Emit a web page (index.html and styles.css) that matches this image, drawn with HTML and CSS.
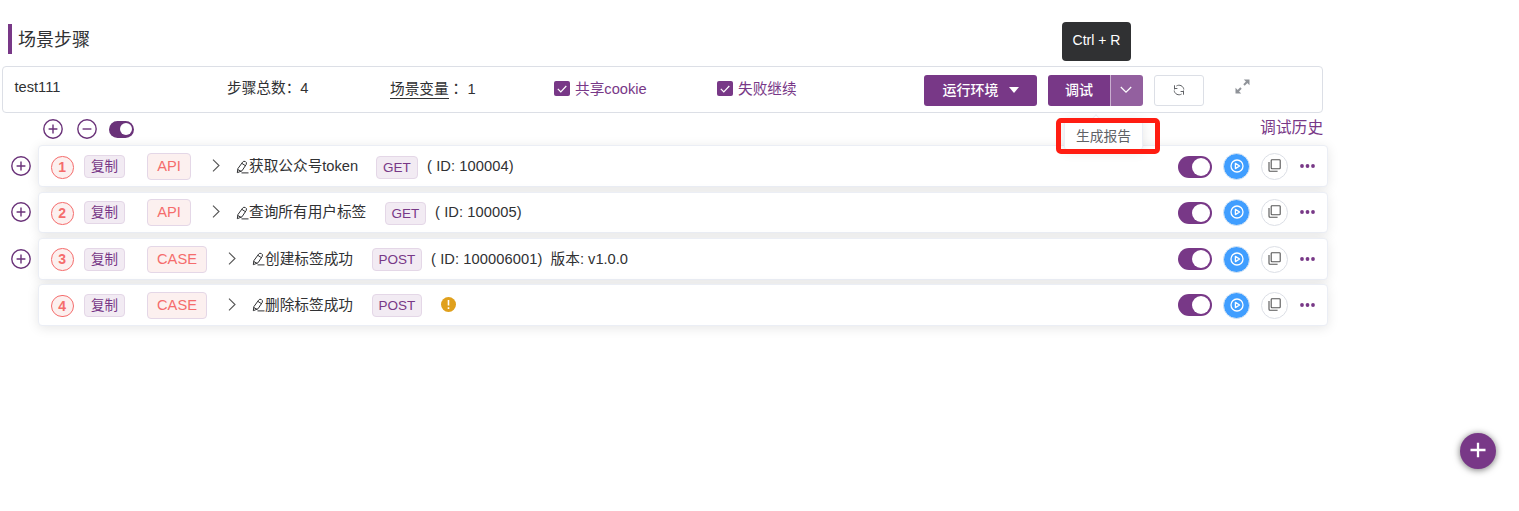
FILE: index.html
```html
<!DOCTYPE html>
<html lang="zh-CN">
<head>
<meta charset="utf-8">
<title>场景步骤</title>
<link rel="stylesheet" href="styles.css">
</head>
<body>
<svg class="defs" width="0" height="0">
  <symbol id="plus" viewBox="0 0 20 20"><g fill="none" stroke="currentColor" stroke-width="1.4"><circle cx="10" cy="10" r="9.2"/><path d="M5.600 10h8.800M10 5.600v8.800"/></g></symbol>
  <symbol id="minus" viewBox="0 0 20 20"><g fill="none" stroke="currentColor" stroke-width="1.4"><circle cx="10" cy="10" r="9.2"/><path d="M5.600 10h8.800"/></g></symbol>
  <symbol id="chevron" viewBox="0 0 8 13"><path d="M1 .7l6 5.800-6 5.800" fill="none" stroke="currentColor" stroke-width="1.1"/></symbol>
  <symbol id="edit" viewBox="0 0 13 14"><path d="M6.600 2.200Q7.600 .7 9.300 1.500T10.300 4.300L6 10.800 1.300 12.700 1.900 8.600zM5.800 3.300L9.400 5.700M1.700 9.500L5.200 11.400M5.500 12.900H12.500" fill="none" stroke="currentColor" stroke-width="1"/></symbol>
  <symbol id="play" viewBox="0 0 14 14"><g fill="none" stroke="currentColor" stroke-width="1.3"><circle cx="7" cy="7" r="6"/><path d="M5.400 4.400v5.200L9.600 7z" stroke-linejoin="round"/></g></symbol>
  <symbol id="copy" viewBox="0 0 13 13"><g fill="none" stroke="currentColor" stroke-width="1.1"><rect x="3.200" y=".8" width="9" height="9" rx=".8"/><path d="M1 2.900v8.300q0 1 1 1h7.600"/></g></symbol>
  <symbol id="dots" viewBox="0 0 15 4"><g fill="currentColor"><circle cx="2" cy="2" r="1.900"/><circle cx="7.500" cy="2" r="1.900"/><circle cx="13" cy="2" r="1.900"/></g></symbol>
  <symbol id="check" viewBox="0 0 10 8"><path d="M.8 3.800l3 3L9.300 1" fill="none" stroke="currentColor" stroke-width="1.2"/></symbol>
</svg>
<main class="page">
  <h1 class="title"><span class="title-bar"></span><span class="title-text">场景步骤</span></h1>

  <section class="toolbar">
    <span class="tb-name">test111</span>
    <span class="tb-total">步骤总数：4</span>
    <span class="tb-vars"><u class="vars-link">场景变量</u><span class="colon" lang="zh-TW">：</span>&nbsp;1</span>
    <label class="check check-cookie"><i class="box"><svg><use href="#check"/></svg></i>共享cookie</label>
    <label class="check check-fail"><i class="box"><svg><use href="#check"/></svg></i>失败继续</label>
    <button class="btn btn-env">运行环境<i class="caret"></i></button>
    <div class="split">
      <button class="btn btn-debug">调试</button>
      <button class="btn btn-more"><svg width="12" height="8" viewBox="0 0 12 8"><path d="M.8 1l5.200 5.200L11.200 1" fill="none" stroke="#fff" stroke-width="1.2"/></svg></button>
      <div class="tooltip">Ctrl + R</div>
      <div class="menu">生成报告</div>
      <svg class="highlight" width="104" height="36"><rect x="2.500" y="2.500" width="99" height="31" rx="2.500" fill="none" stroke="#ff1d12" stroke-width="5"/></svg>
    </div>
    <button class="btn-refresh"><svg width="12" height="12" viewBox="0 0 12 12"><g fill="none" stroke="#606266" stroke-width="1"><path d="M1.500 5.500V1.300M1.500 4.500H4.400M3.400 2A4.800 4.800 0 0 1 10.800 5.500"/><path d="M10.500 6.500v4.200M10.500 7.500H7.600M8.600 10A4.800 4.800 0 0 1 1.200 6.500"/></g></svg></button>
    <svg class="expand" width="15" height="15" viewBox="0 0 15 15"><g fill="#909399"><path d="M8.800 .5h5.700V6.200zM.5 8.800v5.700H6.200z"/><path d="M12 1.600L13.400 3 9.700 6.700 8.300 5.300zM5.300 8.300L6.700 9.700 3 13.400 1.600 12z"/></g></svg>
  </section>

  <div class="subbar">
    <svg class="ic20"><use href="#plus"/></svg>
    <svg class="ic20"><use href="#minus"/></svg>
    <span class="switch small"></span>
    <a class="history">调试历史</a>
  </div>

  <div class="steps">
    <div class="step">
      <svg class="ic20 add"><use href="#plus"/></svg>
      <div class="card">
        <span class="num">1</span><span class="tag copy-tag">复制</span><span class="tag type api">API</span>
        <svg class="chev"><use href="#chevron"/></svg><svg class="edit"><use href="#edit"/></svg>
        <span class="name n1">获取公众号token</span><span class="tag method get">GET</span><span class="id">( ID: 100004)</span>
        <div class="actions"><span class="switch"></span><span class="round run"><svg><use href="#play"/></svg></span><span class="round dup"><svg><use href="#copy"/></svg></span><svg class="dots"><use href="#dots"/></svg></div>
      </div>
    </div>
    <div class="step">
      <svg class="ic20 add"><use href="#plus"/></svg>
      <div class="card">
        <span class="num">2</span><span class="tag copy-tag">复制</span><span class="tag type api">API</span>
        <svg class="chev"><use href="#chevron"/></svg><svg class="edit"><use href="#edit"/></svg>
        <span class="name n2">查询所有用户标签</span><span class="tag method get">GET</span><span class="id">( ID: 100005)</span>
        <div class="actions"><span class="switch"></span><span class="round run"><svg><use href="#play"/></svg></span><span class="round dup"><svg><use href="#copy"/></svg></span><svg class="dots"><use href="#dots"/></svg></div>
      </div>
    </div>
    <div class="step">
      <svg class="ic20 add"><use href="#plus"/></svg>
      <div class="card">
        <span class="num">3</span><span class="tag copy-tag">复制</span><span class="tag type case">CASE</span>
        <svg class="chev"><use href="#chevron"/></svg><svg class="edit"><use href="#edit"/></svg>
        <span class="name n3">创建标签成功</span><span class="tag method post">POST</span><span class="id">( ID: 100006001)</span><span class="version">版本: v1.0.0</span>
        <div class="actions"><span class="switch"></span><span class="round run"><svg><use href="#play"/></svg></span><span class="round dup"><svg><use href="#copy"/></svg></span><svg class="dots"><use href="#dots"/></svg></div>
      </div>
    </div>
    <div class="step">
      <div class="card">
        <span class="num">4</span><span class="tag copy-tag">复制</span><span class="tag type case">CASE</span>
        <svg class="chev"><use href="#chevron"/></svg><svg class="edit"><use href="#edit"/></svg>
        <span class="name n3">删除标签成功</span><span class="tag method post">POST</span>
        <svg class="warn" viewBox="0 0 15 15"><circle cx="7.500" cy="7.500" r="7.500" fill="#e0a01c"/><path d="M7.500 3v5.500M7.500 10.200v1.800" stroke="#fff" stroke-width="1.600"/></svg>
        <div class="actions"><span class="switch"></span><span class="round run"><svg><use href="#play"/></svg></span><span class="round dup"><svg><use href="#copy"/></svg></span><svg class="dots"><use href="#dots"/></svg></div>
      </div>
    </div>
  </div>
  <button class="fab"><svg width="16" height="16" viewBox="0 0 16 16"><path d="M.5 8h15M8 .8v14.400" stroke="#fff" stroke-width="2.300"/></svg></button>
</main>
</body>
</html>
```
FILE: styles.css
```css
* { box-sizing: border-box; }
body {
  margin: 0;
  background: #fff;
  color: #303133;
  font: 14.67px/20px "Liberation Sans", "Noto Sans CJK SC", sans-serif;
  white-space: nowrap;
}
button { margin: 0; padding: 0; border: 0; font: inherit; }
svg { display: block; flex: none; }
.defs { position: absolute; }
.page { position: relative; width: 1519px; height: 511px; padding-top: 24px; overflow: hidden; }

.title { display: flex; align-items: center; gap: 6px; height: 30px; margin: 0 0 12px 8px; font-size: 18px; font-weight: 400; }
.title-bar { width: 4px; height: 30px; background: #783887; }
.title-text { padding-top: 2px; }

.toolbar {
  display: flex;
  align-items: center;
  width: 1321px;
  height: 47px;
  margin-left: 2px;
  padding: 0 0 0 11.500px;
  border: 1px solid #dcdfe6;
  border-radius: 4px;
}
.toolbar > * { flex: none; }
.tb-name { width: 212.500px; margin-top: -5px; }
.tb-total { width: 163px; margin-top: -3px; }
.tb-vars { width: 164px; margin-top: -3px; }
.vars-link { display: inline-block; height: 20px; border-bottom: 1px solid #303133; text-decoration: none; }
.colon { font-family: "Noto Sans CJK TC", sans-serif; }
.check { display: flex; align-items: center; gap: 5.500px; margin-top: -2px; color: #783887; }
.check-cookie { width: 163px; }
.check-fail { width: 207px; }
.box { display: flex; align-items: center; justify-content: center; width: 15.500px; height: 15.500px; border-radius: 2px; background: #783887; color: #fff; }
.box svg { width: 10px; height: 8px; }
.btn { display: flex; align-items: center; justify-content: center; height: 31px; border-radius: 3px; background: #783887; color: #fff; font-size: 14px; font-weight: 500; }
.btn-env { gap: 10px; width: 113px; margin: 1px 11px 0 0; }
.caret { border: 5px solid transparent; border-top: 6px solid #fff; border-bottom: 0; }
.split { position: relative; display: flex; width: 95px; margin: 1px 11px 0 0; }
.btn-debug { width: 62px; border-radius: 3px 0 0 3px; }
.btn-more { width: 33px; padding-right: 2px; border-left: 1px solid #c9afcf; border-radius: 0 3px 3px 0; background: #93609f; }
.tooltip { position: absolute; left: 14px; top: -53px; width: 69px; height: 39px; border-radius: 4px; background: #303133; color: #fff; font-size: 14px; line-height: 37px; text-align: center; }
.menu { position: absolute; z-index: 2; left: 16px; top: 44px; width: 79px; height: 31px; border: 1px solid #ebeef5; border-radius: 3px; background: #fff; box-shadow: 0 2px 12px rgba(0, 0, 0, .1); color: #606266; font-size: 13.800px; line-height: 33px; text-align: center; }
.menu::before { content: ""; position: absolute; left: 27px; top: -4px; width: 7px; height: 7px; border: 1px solid #ebeef5; border-width: 1px 0 0 1px; background: #fff; transform: rotate(45deg); }
.highlight { position: absolute; z-index: 3; left: 8px; top: 43px; }
.btn-refresh { display: flex; align-items: center; justify-content: center; width: 50px; height: 31px; margin: 1px 31px 0 0; border: 1px solid #dcdfe6; border-radius: 3px; background: #fff; }
.expand { margin-top: -7px; }

.subbar { display: flex; align-items: center; height: 32.400px; padding-left: 43px; color: #66307a; }
.ic20 { width: 20px; height: 20px; margin-right: 14px; color: #6a3279; }
.subbar .ic20 + .ic20 { margin-right: 12px; }
.history { width: 64px; margin: -3px 0 0 1126px; color: #783887; font-size: 15.800px; }
.switch { position: relative; flex: none; width: 34px; height: 22px; border-radius: 11px; background: #783887; }
.switch::after { content: ""; position: absolute; right: 2px; top: 2px; width: 18px; height: 18px; border-radius: 50%; background: #fff; }
.switch.small { width: 25px; height: 17px; background: #6a3279; }
.switch.small::after { width: 12px; height: 12px; right: 2px; top: 2.500px; }

.steps { display: flex; flex-direction: column; gap: 4.400px; width: 1328px; }
.step { display: flex; align-items: center; justify-content: flex-end; height: 41.800px; }
.add { margin: 0 7.500px 0 0; }
.card { display: flex; align-items: center; width: 1290px; height: 100%; padding: 1px 12px 0 12px; border: 1px solid #ebeef5; border-radius: 4px; background: #fff; box-shadow: 0 2px 12px rgba(0, 0, 0, .1); }
.card > * { flex: none; }
.num { width: 22.500px; height: 22.500px; margin: 1px 10.500px 0 0; border: 1px solid #f56c6c; border-radius: 50%; background: #fcf0ef; color: #f56c6c; font-size: 14px; font-weight: 700; line-height: 21px; text-align: center; }
.tag { border: 1px solid #e4d7e7; border-radius: 4px; background: #f2ebf3; color: #783887; font-size: 13.500px; text-align: center; }
.copy-tag { width: 41px; height: 23px; margin-right: 22px; line-height: 21px; }
.type { height: 27px; margin-right: 21px; background: #fcf0ef; color: #f56c6c; font-size: 14.670px; line-height: 25px; }
.api { width: 44px; }
.case { width: 60px; }
.chev { width: 8px; height: 13px; margin: -2px 16px 0 0; color: #555; }
.edit { width: 13px; height: 14px; }
.name { margin-top: -1px; }
.n1 { width: 127px; }
.n2 { width: 136px; }
.n3 { width: 107px; }
.method { height: 23px; margin: 1px 9px 0 0; line-height: 21px; }
.get { width: 42px; }
.n2 + .get { width: 41px; }
.post { width: 50px; }
.id { margin: -1px 8px 0 0; letter-spacing: .1px; }
.version { margin-top: -1px; }
.warn { width: 15px; height: 15px; margin: -2px 0 0 10px; }
.actions { display: flex; align-items: center; margin-left: auto; }
.round { display: flex; justify-content: center; width: 27px; height: 27px; border-radius: 50%; }
.run { margin-left: 11px; border: 1px solid #d9e6f4; background: #409eff; color: #fff; padding-top: 5px; }
.run svg { width: 14px; height: 14px; }
.dup { margin: 0 12px 0 11px; border: 1px solid #dcdfe6; color: #555; padding-top: 5px; }
.dup svg { width: 13px; height: 13px; }
.dots { width: 15px; height: 4px; margin-top: -1px; color: #783887; }

.fab { position: absolute; left: 1460px; top: 433px; display: flex; align-items: center; justify-content: center; width: 36px; height: 36px; padding-bottom: 2px; border-radius: 50%; background: #783887; box-shadow: 0 1px 7px rgba(0, 0, 0, .55); }
```
